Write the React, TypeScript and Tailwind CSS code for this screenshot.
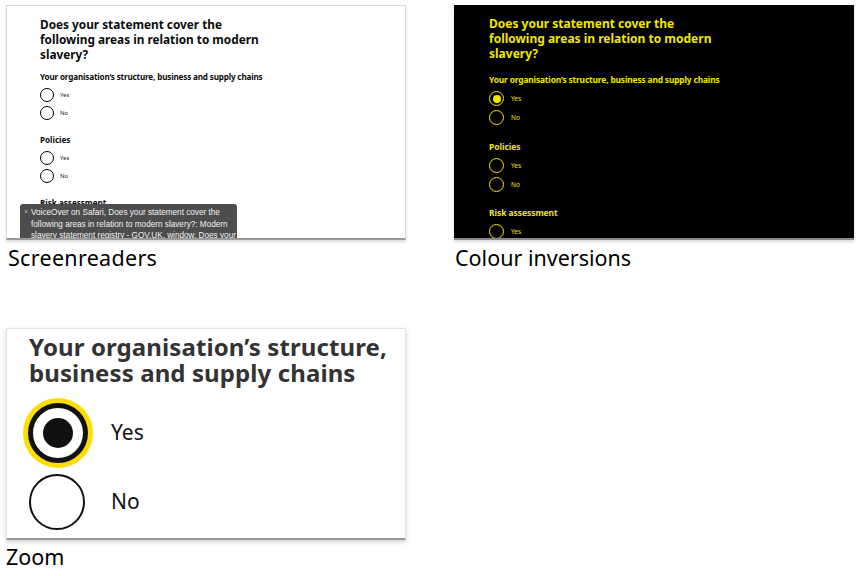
import React from "react";

const gds = { fontFamily: '"Noto Sans", Lato, Arial, sans-serif' };
const cap = { fontFamily: '"Noto Sans", "Open Sans", Arial, sans-serif' };

function Radio({ label, checked, yellow }: { label: string; checked?: boolean; yellow?: boolean }) {
  return (
    <div className={`flex items-center ${yellow ? "h-[19px] gap-[7px]" : "h-[18px] gap-[6px]"}`}>
      <div
        className={`rounded-full flex items-center justify-center ${
          yellow ? "w-[15px] h-[15px] border-[1.5px] border-[#f2e600]" : "w-[14px] h-[14px] border-[1.5px] border-black"
        }`}
      >
        {checked && <div className="w-[8px] h-[8px] rounded-full bg-[#f2e600]" />}
      </div>
      <span className={yellow ? "text-[6.5px] text-[#f2e600]" : "text-[6px] text-[#222]"}>{label}</span>
    </div>
  );
}

function Content({ yellow }: { yellow?: boolean }) {
  return (
    <div style={gds} className={yellow ? "text-[#f2e600]" : "text-[#0b0c0c]"}>
      <h1 className={`font-bold leading-[15px] w-[250px] ${yellow ? "text-[12px]" : "text-[11.8px]"}`}>
        Does your statement cover the
        <br />
        following areas in relation to modern
        <br />
        slavery?
      </h1>
      <div
        className={`font-bold leading-[10px] tracking-[-0.15px] whitespace-nowrap ${
          yellow ? "text-[8.4px] mt-[14px]" : "text-[8.1px] mt-[10px]"
        }`}
      >
        Your organisation’s structure, business and supply chains
      </div>
      <div className="flex flex-col mt-[4px]">
        <Radio label="Yes" yellow={yellow} checked={yellow} />
        <Radio label="No" yellow={yellow} />
      </div>
      <div className={`font-bold leading-[10px] ${yellow ? "text-[8.4px] mt-[15px]" : "text-[8.1px] mt-[13px]"}`}>
        Policies
      </div>
      <div className="flex flex-col mt-[4px]">
        <Radio label="Yes" yellow={yellow} />
        <Radio label="No" yellow={yellow} />
      </div>
      <div className={`font-bold leading-[10px] ${yellow ? "text-[8.4px] mt-[14px]" : "text-[8.1px] mt-[13px]"}`}>
        Risk assessment
      </div>
      {yellow && (
        <div className="flex flex-col mt-[4px]">
          <Radio label="Yes" yellow={yellow} />
        </div>
      )}
    </div>
  );
}

export default function App() {
  return (
    <div className="w-[860px] h-[576px] bg-white relative overflow-hidden">
      <div className="flex gap-[48px] pl-[6px] pt-[5px]">
        <div className="flex flex-col">
          <div className="w-[400px] h-[235px] bg-white border border-[#d6d6d6] border-b-[2px] border-b-[#9a9a9a] shadow-[0_2px_3px_rgba(0,0,0,0.15)] relative overflow-hidden pl-[33px] pt-[11px]">
            <Content />
            <div
              className="absolute left-[13px] top-[198px] w-[217px] h-[40px] bg-[#4d4d4d] rounded-t-[3px] pl-[11px] pt-[3px] text-[8.2px] leading-[11.5px] text-[#f0f0f0] whitespace-nowrap"
              style={{ fontFamily: '"Liberation Sans", Arial, sans-serif' }}
            >
              <span className="absolute left-[4px] top-[2px] text-[7px] text-[#bbb]">×</span>
              VoiceOver on Safari, Does your statement cover the
              <br />
              following areas in relation to modern slavery?: Modern
              <br />
              slavery statement registry - GOV.UK, window, Does your
            </div>
          </div>
          <div style={cap} className="text-[21.5px] leading-[28px] mt-[4px] ml-[2px] text-black tracking-[0.3px]">
            Screenreaders
          </div>
        </div>
        <div className="flex flex-col">
          <div className="w-[400px] h-[235px] bg-black border-b-[2px] border-b-[#8a8a8a] shadow-[0_2px_3px_rgba(0,0,0,0.15)] overflow-hidden pl-[35px] pt-[11px]">
            <Content yellow />
          </div>
          <div style={cap} className="text-[21.5px] leading-[28px] mt-[4px] ml-[1px] text-black">
            Colour inversions
          </div>
        </div>
      </div>
      <div className="pl-[6px] mt-[56px] flex flex-col">
        <div
          className="w-[400px] h-[212px] bg-white border border-[#e2e2e2] border-b-[2px] border-b-[#9a9a9a] shadow-[0_2px_4px_rgba(0,0,0,0.18)] overflow-hidden pl-[22px] pt-[5px]"
          style={gds}
        >
          <div className="text-[24px] font-bold leading-[26px] text-[#333] tracking-[0.1px]">
            Your organisation’s structure,
            <br />
            business and supply chains
          </div>
          <div className="flex items-center mt-[12px] ml-[-6px] h-[70px]">
            <div className="w-[70px] h-[70px] rounded-full bg-[#ffdd00] flex items-center justify-center">
              <div className="w-[60px] h-[60px] rounded-full border-[5px] border-[#111] bg-white flex items-center justify-center">
                <div className="w-[30px] h-[30px] rounded-full bg-[#111]" />
              </div>
            </div>
            <span className="ml-[18px] text-[21px] text-[#111]">Yes</span>
          </div>
          <div className="flex items-center mt-[6px] h-[56px]">
            <div className="w-[56px] h-[56px] rounded-full border-[2px] border-[#111] bg-white" />
            <span className="ml-[26px] text-[21px] text-[#111]">No</span>
          </div>
        </div>
        <div style={cap} className="text-[21.5px] leading-[28px] mt-[3px] text-black">
          Zoom
        </div>
      </div>
    </div>
  );
}
